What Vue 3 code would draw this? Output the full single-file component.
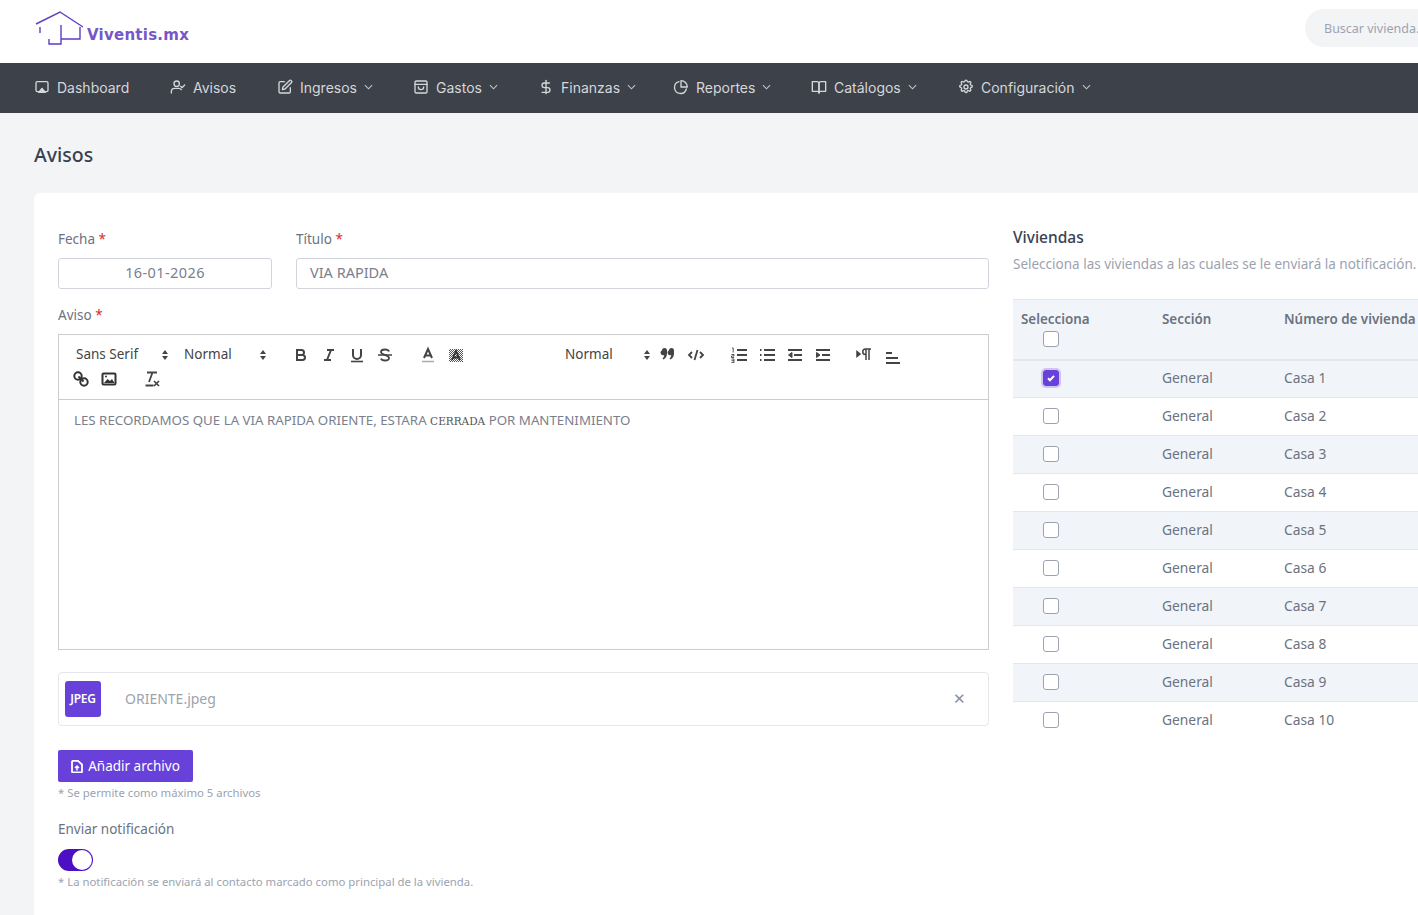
<script setup>
const nav = [
  { label: 'Dashboard', icon: 'dash', w: 136 },
  { label: 'Avisos', icon: 'user', w: 107 },
  { label: 'Ingresos', icon: 'edit', caret: true, w: 136 },
  { label: 'Gastos', icon: 'bag', caret: true, w: 125 },
  { label: 'Finanzas', icon: 'dollar', caret: true, w: 135 },
  { label: 'Reportes', icon: 'pie', caret: true, w: 138 },
  { label: 'Catálogos', icon: 'book', caret: true, w: 147 },
  { label: 'Configuración', icon: 'gear', caret: true, w: 160 },
]
const rows = Array.from({ length: 10 }, (_, i) => ({ casa: `Casa ${i + 1}`, checked: i === 0 }))
</script>

<template>
  <div class="page">
    <header class="top">
      <div class="logo">
        <svg width="50" height="36" viewBox="0 0 50 36" fill="none" stroke="#5f3dc4" stroke-width="1.4">
          <path d="M2 14 L26 2 L49 17" />
          <path d="M6 17 V23" />
          <path d="M46 17 V29 H27" />
          <path d="M27 15 V34 H15 V29" />
        </svg>
        <span class="logo-text">Viventis.mx</span>
      </div>
      <div class="search">Buscar vivienda...</div>
    </header>

    <nav class="nav">
      <div v-for="n in nav" :key="n.label" class="nav-item" :style="{ width: n.w + 'px' }">
        <svg class="nav-ic" viewBox="0 0 24 24" fill="none" stroke="#d5d7db" stroke-width="2" stroke-linecap="round" stroke-linejoin="round">
          <template v-if="n.icon === 'dash'">
            <path d="M7 19H5a2 2 0 0 1-2-2V6a2 2 0 0 1 2-2h14a2 2 0 0 1 2 2v11a2 2 0 0 1-2 2h-2" />
            <path d="M12 14l5 6H7z" fill="#d5d7db" />
          </template>
          <template v-else-if="n.icon === 'user'">
            <circle cx="10" cy="7" r="4" />
            <path d="M2 21v-2a5 5 0 0 1 5-5h6a5 5 0 0 1 4 2" />
            <path d="M16 11l2 2 4-4" />
          </template>
          <template v-else-if="n.icon === 'edit'">
            <path d="M11 4H5a2 2 0 0 0-2 2v13a2 2 0 0 0 2 2h13a2 2 0 0 0 2-2v-6" />
            <path d="M18.5 2.5a2.1 2.1 0 0 1 3 3L12 15l-4 1 1-4z" />
          </template>
          <template v-else-if="n.icon === 'bag'">
            <rect x="3" y="3" width="18" height="18" rx="2" />
            <path d="M3 8h18" />
            <path d="M8 12a4 4 0 0 0 8 0" />
          </template>
          <template v-else-if="n.icon === 'dollar'">
            <path d="M12 2v20" />
            <path d="M17 6H9.500a3.500 3.500 0 0 0 0 7h5a3.500 3.500 0 0 1 0 7H6" />
          </template>
          <template v-else-if="n.icon === 'pie'">
            <path d="M20 15A9 9 0 1 1 9 4" />
            <path d="M12 2.500a9.500 9.500 0 0 1 9.500 9.500H12z" />
          </template>
          <template v-else-if="n.icon === 'book'">
            <path d="M2 4h7a3 3 0 0 1 3 3v14a2.500 2.500 0 0 0-2.500-2.500H2z" />
            <path d="M22 4h-7a3 3 0 0 0-3 3v14a2.500 2.500 0 0 1 2.500-2.500H22z" />
          </template>
          <template v-else>
            <circle cx="12" cy="12" r="3" />
            <path d="M10.300 3.300a1.700 1.700 0 0 1 3.400 0 1.700 1.700 0 0 0 2.600 1l.1-.1a1.700 1.700 0 0 1 2.400 2.400 1.700 1.700 0 0 0 1 2.700 1.700 1.700 0 0 1 0 3.400 1.700 1.700 0 0 0-1 2.700 1.700 1.700 0 0 1-2.400 2.400 1.700 1.700 0 0 0-2.700 1 1.700 1.700 0 0 1-3.400 0 1.700 1.700 0 0 0-2.700-1 1.700 1.700 0 0 1-2.400-2.400 1.700 1.700 0 0 0-1-2.700 1.700 1.700 0 0 1 0-3.400 1.700 1.700 0 0 0 1-2.700 1.700 1.700 0 0 1 2.400-2.400 1.700 1.700 0 0 0 2.700-1z" />
          </template>
        </svg>
        <span>{{ n.label }}</span>
        <svg v-if="n.caret" class="caret" viewBox="0 0 10 6" fill="none" stroke="#c3c6cb" stroke-width="1.200"><path d="M1 1l4 4 4-4" /></svg>
      </div>
    </nav>

    <main class="main">
      <h1 class="title">Avisos</h1>
      <section class="card">
        <div class="left">
          <div class="row-top">
            <div class="field date">
              <label>Fecha <i>*</i></label>
              <div class="input center">16-01-2026</div>
            </div>
            <div class="field grow">
              <label>Título <i>*</i></label>
              <div class="input">VIA RAPIDA</div>
            </div>
          </div>
          <div class="field aviso">
            <label>Aviso <i>*</i></label>
            <div class="editor">
              <div class="toolbar">
                <div class="tool-line">
                  <span class="pick p1">Sans Serif<b class="ud"></b></span>
                  <span class="pick p2">Normal<b class="ud"></b></span>
                  <span class="tb">
                    <svg viewBox="0 0 18 18" class="ti" fill="none" stroke="#444" stroke-width="2"><path d="M5 4h4.500a2.500 2.500 0 0 1 0 5H5zM5 9h5.500a2.500 2.500 0 0 1 0 5H5z" /></svg>
                  </span>
                  <span class="tb"><svg viewBox="0 0 18 18" class="ti" fill="none" stroke="#444" stroke-width="2"><path d="M7 4h7M4 14h7M11 4L7 14" /></svg></span>
                  <span class="tb"><svg viewBox="0 0 18 18" class="ti" fill="none" stroke="#444" stroke-width="2"><path d="M5 3v6a4 4 0 0 0 8 0V3" /><path d="M3 15.500h12" stroke-width="1.600" /></svg></span>
                  <span class="tb"><svg viewBox="0 0 18 18" class="ti" fill="none" stroke="#444" stroke-width="1.800"><path d="M13 5.500C12.500 4 11 3.500 9 3.500c-2.500 0-4 1-4 2.500s1.500 2 4 3 4 1.500 4 3-1.500 2.500-4 2.500c-2 0-3.500-.5-4-2" /><path d="M2 9h14" stroke-width="1.500" /></svg></span>
                  <span class="tb t-color"><svg viewBox="0 0 18 18" class="ti" fill="none"><path d="M5 12l4-9 4 9M6.500 9.500h5" stroke="#444" stroke-width="2" /><path d="M3 15.500h12" stroke="#aaa" stroke-width="1.500" /></svg></span>
                  <span class="tb"><svg viewBox="0 0 18 18" class="ti" fill="none"><defs><pattern id="dots" width="2" height="2" patternUnits="userSpaceOnUse"><rect width="1" height="1" fill="#555" /><rect x="1" y="1" width="1" height="1" fill="#555" /></pattern></defs><rect x="2" y="3" width="14" height="13" fill="url(#dots)" /><path d="M5 14l4-9 4 9M6.500 11.500h5" stroke="#333" stroke-width="1.800" /></svg></span>
                  <span class="pick p3">Normal<b class="ud"></b></span>
                  <span class="tb"><svg viewBox="0 0 18 18" class="ti"><path d="M3 4.500a2.500 2.500 0 0 1 5 0v3c0 3-1.500 5-3.500 6l-1-1c1-1 1.700-2 1.700-3.500A2.500 2.500 0 0 1 3 4.500zM10 4.500a2.500 2.500 0 0 1 5 0v3c0 3-1.500 5-3.500 6l-1-1c1-1 1.700-2 1.700-3.500A2.500 2.500 0 0 1 10 4.500z" fill="#444" /></svg></span>
                  <span class="tb"><svg viewBox="0 0 18 18" class="ti" fill="none" stroke="#444" stroke-width="1.800"><path d="M5 6L2 9l3 3M13 6l3 3-3 3M10.500 4L7.500 14" /></svg></span>
                  <span class="tb t-ol"><svg viewBox="0 0 18 18" class="ti" fill="none" stroke="#444" stroke-width="1.800"><path d="M7 4h10M7 9h10M7 14h10" /><path d="M2 2h1.200v4.500M1.500 8.500h2.500v1.500h-2.500v1.500h2.500M1.500 13h2.500v3.500h-2.500M1.500 14.700h2.500" stroke-width=".9" /></svg></span>
                  <span class="tb"><svg viewBox="0 0 18 18" class="ti" fill="none" stroke="#444" stroke-width="1.800"><path d="M6 4h11M6 9h11M6 14h11M2 4h1.500M2 9h1.500M2 14h1.500" /></svg></span>
                  <span class="tb"><svg viewBox="0 0 18 18" class="ti" fill="none" stroke="#444" stroke-width="1.800"><path d="M2 4h14M8 9h8M2 14h14" /><path d="M6 6.500L2.500 9 6 11.500z" fill="#444" stroke-width="1" /></svg></span>
                  <span class="tb"><svg viewBox="0 0 18 18" class="ti" fill="none" stroke="#444" stroke-width="1.800"><path d="M2 4h14M8 9h8M2 14h14" /><path d="M2.500 6.500L6 9l-3.500 2.500z" fill="#444" stroke-width="1" /></svg></span>
                  <span class="tb t-rtl"><svg viewBox="0 0 18 18" class="ti" fill="none" stroke="#444" stroke-width="1.500"><path d="M1 5.500L4 8 1 10.500z" fill="#444" /><path d="M10 3v11M13 3v11M15 3H9.500a2.700 2.700 0 0 0 0 5.500H10" /></svg></span>
                  <span class="tb"><svg viewBox="0 0 18 18" class="ti low" fill="none" stroke="#444" stroke-width="2"><path d="M2 5h6M2 10h12M2 15h14" /></svg></span>
                </div>
                <div class="tool-line second">
                  <span class="tb"><svg viewBox="0 0 18 18" class="ti" fill="none" stroke="#333" stroke-width="2"><path d="M6.500 6.500l5 5" /><circle cx="6" cy="6" r="3.700" /><circle cx="12" cy="12" r="3.700" /></svg></span>
                  <span class="tb"><svg viewBox="0 0 18 18" class="ti" fill="none" stroke="#333" stroke-width="2"><rect x="2.500" y="3.500" width="13" height="11" rx="1" /><path d="M4 13l3.500-4 2.500 2 2-2 2.500 4z" fill="#333" stroke-width="0" /><circle cx="6" cy="6.500" r="1" fill="#333" stroke-width="0" /></svg></span>
                  <span class="tb t-clean"><svg viewBox="0 0 18 18" class="ti" fill="none" stroke="#444" stroke-width="1.800"><path d="M4 2.500h10M9.500 2.500L6 12M2.500 15.500h8" /><path d="M11 11l5 5M16 11l-5 5" stroke-width="1.700" /></svg></span>
                </div>
              </div>
              <div class="editor-body">LES RECORDAMOS QUE LA VIA RAPIDA ORIENTE, ESTARA <span class="serif">CERRADA</span> POR MANTENIMIENTO</div>
            </div>
          </div>

          <div class="file">
            <div class="badge">JPEG</div>
            <span class="fname">ORIENTE.jpeg</span>
            <span class="close">✕</span>
          </div>

          <button class="btn">
            <svg width="12" height="13" viewBox="0 0 12 13"><path d="M2 .9h5l4 3.600V11.500a.9.900 0 0 1-.9.9H1.900a.9.900 0 0 1-.9-.9V1.500A.9.900 0 0 1 2 .9z" fill="none" stroke="#fff" stroke-width="1.800" /><path d="M6 10.500V6M4 8l2-2 2 2" stroke="#fff" stroke-width="1.500" fill="none" /></svg>
            <span>Añadir archivo</span>
          </button>
          <p class="hint first">* Se permite como máximo 5 archivos</p>

          <p class="notif">Enviar notificación</p>
          <div class="switch"><span class="knob"></span></div>
          <p class="hint">* La notificación se enviará al contacto marcado como principal de la vivienda.</p>
        </div>

        <div class="right">
          <h2>Viviendas</h2>
          <p class="sub">Selecciona las viviendas a las cuales se le enviará la notificación.</p>
          <table>
            <thead>
              <tr>
                <th class="c1">Selecciona<span class="check head"></span></th>
                <th class="c2">Sección</th>
                <th>Número de vivienda</th>
              </tr>
            </thead>
            <tbody>
              <tr v-for="(r, i) in rows" :key="r.casa" :class="{ odd: i % 2 === 0 }">
                <td class="c1">
                  <span class="check" :class="{ on: r.checked }">
                    <svg v-if="r.checked" width="10" height="10" viewBox="0 0 10 10" fill="none" stroke="#fff" stroke-width="2"><path d="M2 5.200l2 2 4-4.400" /></svg>
                  </span>
                </td>
                <td class="c2">General</td>
                <td>{{ r.casa }}</td>
              </tr>
            </tbody>
          </table>
        </div>
      </section>
    </main>
  </div>
</template>

<style>
html, body { margin: 0; overflow: hidden; }
</style>

<style scoped>
.page {
  width: 1418px;
  height: 915px;
  overflow: hidden;
  background: #f3f4f6;
  font-family: "Noto Sans", "Open Sans", sans-serif;
  color: #6b7280;
}
.top {
  height: 63px;
  background: #fff;
  display: flex;
  align-items: flex-start;
  justify-content: space-between;
  padding-left: 34px;
  box-sizing: border-box;
  width: 1600px;
}
.logo { display: flex; align-items: flex-start; padding-top: 10px; }
.logo-text { font: bold 15px/16px "DejaVu Sans", sans-serif; color: #7657c9; margin: 17px 0 0 3px; letter-spacing: .25px; }
.search {
  width: 180px;
  margin: 9px 96px 0 0;
  height: 38px;
  line-height: 39px;
  border-radius: 19px;
  background: #f3f4f6;
  padding-left: 19px;
  font-size: 12.500px;
  color: #9ca3af;
}
.nav {
  height: 50px;
  background: #3d4149;
  display: flex;
  align-items: center;
  padding: 0 0 2px 34px;
  box-sizing: border-box;
  font-family: Inter, sans-serif;
  font-size: 14px;
  color: #d5d7db;
}
.nav-item { display: flex; align-items: center; gap: 7px; white-space: nowrap; flex: none; }
.nav-ic { width: 16px; height: 16px; flex: none; }
.caret { width: 9px; height: 6px; }
.main { padding: 0 0 0 34px; }
.title { margin: 0; padding-top: 29px; height: 51px; font-size: 19.500px; line-height: 25px; font-weight: 500; color: #374151; }
.card {
  width: 1960px;
  background: #fff;
  border-radius: 6px;
  padding: 34px 24px 40px;
  display: grid;
  grid-template-columns: 931px 1fr;
  gap: 24px;
  box-sizing: border-box;
}
.left { padding-top: 3px; }
.row-top { display: flex; gap: 24px; }
.date { width: 214px; }
.grow { flex: 1; }
label, .notif { display: block; font-size: 13.500px; line-height: 18px; color: #6b7280; margin-bottom: 10px; }
label i { color: #dc2626; font-style: normal; }
.input {
  height: 31px;
  border: 1px solid #d1d5db;
  border-radius: 3px;
  box-sizing: border-box;
  padding-left: 13px;
  line-height: 27px;
  font-size: 14.500px;
  color: #7a808c;
}
.center { text-align: center; padding-left: 0; letter-spacing: .4px; }
.aviso { margin-top: 17px; }
.editor { border: 1px solid #ccc; height: 316px; box-sizing: border-box; }
.toolbar { height: 65px; border-bottom: 1px solid #ccc; box-sizing: border-box; padding: 8px 8px 0; }
.tool-line { display: flex; align-items: center; height: 24px; font-size: 13.500px; color: #444; }
.pick { display: inline-flex; align-items: center; position: relative; padding: 0 0 2px 9px; box-sizing: border-box; flex: none; }
.p1 { width: 108px; }
.p2 { width: 112px; }
.p3 { width: 98px; margin-left: 86px; }
.ud { position: absolute; top: 5px; width: 7px; height: 10px; }
.p1 .ud { right: 6px; }
.p2 .ud { right: 20px; }
.p3 .ud { right: 3px; }
.ud::before, .ud::after { content: ""; position: absolute; left: 0; border-left: 3.500px solid transparent; border-right: 3.500px solid transparent; }
.ud::before { top: 0; border-bottom: 4px solid #444; }
.ud::after { bottom: 0; border-top: 4px solid #444; }
.tb { width: 28px; display: inline-flex; justify-content: center; flex: none; }
.ti { width: 18px; height: 18px; }
.low { margin-top: 4px; }
.t-color { margin-left: 15px; }
.t-ol { margin-left: 15px; }
.t-rtl { margin-left: 14px; }
.t-clean { margin-left: 15px; }
.editor-body { padding: 11px 15px; font-size: 13.300px; line-height: 18px; color: #7a808c; }
.serif { font-family: "DejaVu Serif", serif; font-size: 10.500px; color: #555; }
.file {
  margin-top: 22px;
  height: 54px;
  border: 1px solid #e5e7eb;
  border-radius: 4px;
  box-sizing: border-box;
  display: flex;
  align-items: center;
  padding: 0 22px 0 6px;
}
.badge { width: 36px; height: 36px; background: #6741d9; border-radius: 3px; color: #fff; font-size: 12px; font-weight: 600; line-height: 36px; text-align: center; letter-spacing: -.3px; }
.fname { margin-left: 24px; font-size: 14px; color: #9ca3af; flex: 1; padding-bottom: 2px; }
.close { color: #8a8f98; font-size: 15px; padding-bottom: 2px; }
.btn {
  margin-top: 24px;
  display: inline-flex;
  align-items: center;
  justify-content: center;
  gap: 5px;
  width: 135px;
  height: 32px;
  background: #6741d9;
  border: 0;
  border-radius: 2px;
  color: #fff;
  font: 13.500px "Noto Sans", sans-serif;
}
.hint { margin: 0; font-size: 11.350px; line-height: 16px; color: #9ca3af; }
.first { margin-top: 3px; }
.notif { margin: 19px 0 11px; }
.switch { width: 35px; height: 22px; background: #4c0fc4; border-radius: 11px; position: relative; }
.knob { position: absolute; right: 1px; top: 1px; width: 20px; height: 20px; border-radius: 50%; background: #fff; }
.switch + .hint { margin-top: 3px; }
h2 { margin: 0; font-size: 15.500px; line-height: 20px; font-weight: 500; color: #374151; }
.sub { margin: 7px 0 25px; font-size: 13.500px; line-height: 20px; color: #9ca3af; white-space: nowrap; }
table { border-collapse: collapse; width: 700px; table-layout: fixed; font-size: 13.800px; }
th { background: #f1f5f9; text-align: left; font-weight: 600; color: #6b7280; font-size: 13.400px; height: 60px; vertical-align: top; padding: 10px 8px 0; border-top: 1px solid #e5e7eb; border-bottom: 2px solid #e5e7eb; box-sizing: border-box; white-space: nowrap; line-height: 18px; }
td { height: 38px; padding: 0 8px 2px; border-bottom: 1px solid #e5e7eb; box-sizing: border-box; color: #6b7280; }
tbody tr:last-child td { border-bottom: 0; }
.odd td { background: #f1f5f9; }
th.c1, td.c1 { width: 141px; }
th.c2, td.c2 { width: 122px; }
.check { display: flex; align-items: center; justify-content: center; width: 16px; height: 16px; margin-left: 22px; border: 1px solid #9ca3af; border-radius: 3px; background: #fff; box-sizing: border-box; }
.head { margin-top: 3px; }
.on { background: #6741d9; border-color: #6741d9; box-shadow: 0 0 0 2px #cfc4f3; }
</style>
